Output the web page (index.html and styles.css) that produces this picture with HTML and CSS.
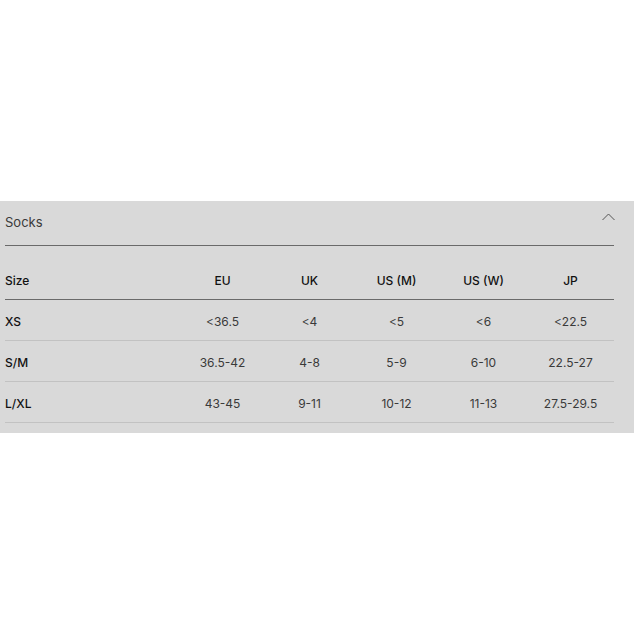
FILE: index.html
```html
<!DOCTYPE html>
<html>
<head>
<meta charset="utf-8">
<link rel="stylesheet" href="styles.css">
</head>
<body>
<div class="page">
  <section class="panel">
    <div class="acc-head">
      <span class="acc-title">Socks</span>
      <svg class="chev" width="13" height="8" viewBox="0 0 13 8"><path d="M0.5 7 L6.5 1 L12.5 7" fill="none" stroke="#555" stroke-width="1"/></svg>
    </div>
    <div class="table">
      <div class="row head">
        <div class="c first">Size</div><div class="c">EU</div><div class="c">UK</div><div class="c">US (M)</div><div class="c">US (W)</div><div class="c">JP</div>
      </div>
      <div class="row">
        <div class="c first">XS</div><div class="c">&lt;36.5</div><div class="c">&lt;4</div><div class="c">&lt;5</div><div class="c">&lt;6</div><div class="c">&lt;22.5</div>
      </div>
      <div class="row">
        <div class="c first">S/M</div><div class="c">36.5-42</div><div class="c">4-8</div><div class="c">5-9</div><div class="c">6-10</div><div class="c">22.5-27</div>
      </div>
      <div class="row">
        <div class="c first">L/XL</div><div class="c">43-45</div><div class="c">9-11</div><div class="c">10-12</div><div class="c">11-13</div><div class="c">27.5-29.5</div>
      </div>
    </div>
  </section>
</div>
</body>
</html>
```
FILE: styles.css
```css
html, body { margin: 0; padding: 0; background: #fff; }
body { font-family: Inter, "Liberation Sans", sans-serif; }
.page { padding-top: 201px; }
.panel {
  background: #d9d9d9;
  padding: 0 20px 10px 5px;
}
.acc-head {
  display: flex;
  justify-content: space-between;
  align-items: flex-start;
  height: 44px;
  border-bottom: 1px solid #6a6a6a;
}
.acc-title {
  font-size: 13px;
  color: #3a3a3a;
  margin-top: 13px;
  line-height: 17px;
}
.chev { margin-top: 12px; margin-right: -1px; }
.table { padding-top: 12px; }
.row {
  display: grid;
  grid-template-columns: 2fr 1fr 1fr 1fr 1fr 1fr;
  height: 40px;
  align-items: center;
  border-bottom: 1px solid #c2c2c2;
  font-size: 12px;
  color: #3a3a3a;
}
.row.head {
  border-bottom: 1px solid #6a6a6a;
  color: #111;
  font-weight: 500;
  padding-top: 1px;
}
.c { text-align: center; padding-top: 2px; }
.c.first { text-align: left; color: #111; font-weight: 500; }
```
